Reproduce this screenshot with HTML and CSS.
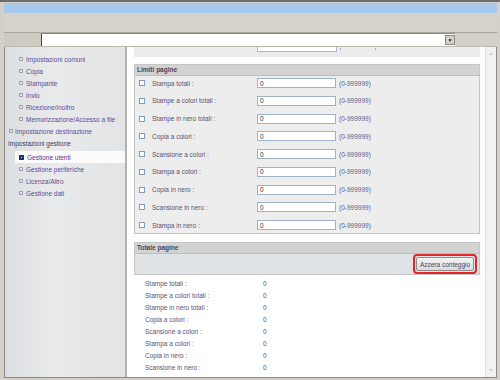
FILE: index.html
```html
<!DOCTYPE html>
<html lang="it">
<head>
    <meta charset="UTF-8">
    <title>Gestione utenti</title>
    <link rel="stylesheet" href="styles.css">
</head>
<body>
    <div class="window">
        <div class="titlebar"></div>
        <div class="toolbar"></div>
        <div class="addressbar">
            <div class="addr-side"></div>
            <div class="addr-field"><span class="addr-drop">&#9660;</span></div>
        </div>

        <div class="content">
            <nav class="sidebar">
                <a href="#" class="nav-item sub"><span class="bullet"></span>Impostazioni comuni</a>
                <a href="#" class="nav-item sub"><span class="bullet"></span>Copia</a>
                <a href="#" class="nav-item sub"><span class="bullet"></span>Stampante</a>
                <a href="#" class="nav-item sub"><span class="bullet"></span>Invio</a>
                <a href="#" class="nav-item sub"><span class="bullet"></span>Ricezione/Inoltro</a>
                <a href="#" class="nav-item sub"><span class="bullet"></span>Memorizzazione/Accesso a file</a>
                <a href="#" class="nav-item top"><span class="bullet"></span>Impostazione destinazione</a>
                <div class="nav-heading">Impostazioni gestione</div>
                <a href="#" class="nav-item sub selected"><span class="bullet"></span>Gestione utenti</a>
                <a href="#" class="nav-item sub"><span class="bullet"></span>Gestione periferiche</a>
                <a href="#" class="nav-item sub"><span class="bullet"></span>Licenza/Altro</a>
                <a href="#" class="nav-item sub"><span class="bullet"></span>Gestione dati</a>
            </nav>

            <main class="pane">
                <div class="prev-band">
                    <span class="prev-input"></span>
                    <span class="tick"></span>
                    <span class="tick far"></span>
                </div>

                <section class="group">
                    <div class="group-head">Limiti pagine</div>
                    <div class="group-body limits">
                        <div class="limit-row"><input type="checkbox" class="check"><label>Stampa totali :</label><input type="text" class="field" value="0"><span class="range">(0-999999)</span></div>
                        <div class="limit-row"><input type="checkbox" class="check"><label>Stampe a colori totali :</label><input type="text" class="field" value="0"><span class="range">(0-999999)</span></div>
                        <div class="limit-row"><input type="checkbox" class="check"><label>Stampe in nero totali :</label><input type="text" class="field" value="0"><span class="range">(0-999999)</span></div>
                        <div class="limit-row"><input type="checkbox" class="check"><label>Copia a colori :</label><input type="text" class="field" value="0"><span class="range">(0-999999)</span></div>
                        <div class="limit-row"><input type="checkbox" class="check"><label>Scansione a colori :</label><input type="text" class="field" value="0"><span class="range">(0-999999)</span></div>
                        <div class="limit-row"><input type="checkbox" class="check"><label>Stampa a colori :</label><input type="text" class="field" value="0"><span class="range">(0-999999)</span></div>
                        <div class="limit-row"><input type="checkbox" class="check"><label>Copia in nero :</label><input type="text" class="field" value="0"><span class="range">(0-999999)</span></div>
                        <div class="limit-row"><input type="checkbox" class="check"><label>Scansione in nero :</label><input type="text" class="field" value="0"><span class="range">(0-999999)</span></div>
                        <div class="limit-row"><input type="checkbox" class="check"><label>Stampa in nero :</label><input type="text" class="field" value="0"><span class="range">(0-999999)</span></div>
                    </div>
                </section>

                <section class="group totals">
                    <div class="group-head">Totale pagine</div>
                    <div class="group-body actions">
                        <span class="highlight"><button type="button">Azzera conteggio</button></span>
                    </div>
                </section>

                <div class="count-list">
                    <div class="count-row"><span class="count-label">Stampe totali :</span><span>0</span></div>
                    <div class="count-row"><span class="count-label">Stampe a colori totali :</span><span>0</span></div>
                    <div class="count-row"><span class="count-label">Stampe in nero totali :</span><span>0</span></div>
                    <div class="count-row"><span class="count-label">Copia a colori :</span><span>0</span></div>
                    <div class="count-row"><span class="count-label">Scansione a colori :</span><span>0</span></div>
                    <div class="count-row"><span class="count-label">Stampa a colori :</span><span>0</span></div>
                    <div class="count-row"><span class="count-label">Copia in nero :</span><span>0</span></div>
                    <div class="count-row"><span class="count-label">Scansione in nero :</span><span>0</span></div>
                </div>
            </main>

            <div class="scrollbar">
                <span class="arrow up"></span>
                <span class="arrow down"></span>
            </div>
        </div>
    </div>
</body>
</html>
```

FILE: styles.css
```css
html, body {
    margin: 0;
    background: #d4d0c8;
}
body {
    font-family: "Liberation Sans", Arial, sans-serif;
    font-size: 6.5px;
}
.window {
    width: 500px;
    height: 380px;
    box-sizing: border-box;
    border-top: 2px solid #6e6e6e;
    padding: 1px 3px 2px 4px;
    display: flex;
    flex-direction: column;
    background: #d4d0c8;
}
.titlebar {
    height: 10px;
    background: #a8c9ee;
}
.toolbar {
    height: 19px;
    background: #d6d3cd;
    border-bottom: 1px solid #aaa69e;
}
.addressbar {
    height: 13px;
    display: flex;
    border-bottom: 1px solid #bcb8b0;
}
.addr-side {
    width: 37px;
    background: #cfcbc3;
}
.addr-field {
    width: 414px;
    box-sizing: border-box;
    background: white;
    border-left: 1px solid #4a4a4a;
    border-top: 1px solid #8a8a8a;
    display: flex;
    justify-content: flex-end;
    align-items: center;
}
.addr-drop {
    width: 10px;
    height: 10px;
    box-sizing: border-box;
    background: #d4d0c8;
    border: 1px solid #8a8a8a;
    font-size: 5px;
    line-height: 8px;
    text-align: center;
    color: #222;
}

.content {
    flex-grow: 1;
    display: flex;
    border-bottom: 1px solid #8a8a8a;
    overflow: hidden;
}
.sidebar {
    width: 123px;
    box-sizing: border-box;
    border-left: 1px solid #8a8a8a;
    border-right: 2px solid #b2b2b2;
    background: linear-gradient(to right, #dcdfe1, #e8eaeb 40%, #e2e4e6);
    padding-top: 6px;
    display: flex;
    flex-direction: column;
}
.nav-item {
    height: 12px;
    display: flex;
    align-items: center;
    gap: 2px;
    color: #5f4b9a;
    text-decoration: none;
    white-space: nowrap;
}
.nav-item.sub {
    padding-left: 14px;
    gap: 3px;
}
.nav-item.top {
    padding-left: 4px;
}
.bullet {
    width: 4px;
    height: 4px;
    box-sizing: border-box;
    border: 1px solid #a2a4b8;
}
.nav-heading {
    height: 14px;
    line-height: 14px;
    padding-left: 3px;
    color: #3f3a60;
}
.nav-item.selected {
    margin-left: 10px;
    padding-left: 4px;
    background: #fbfbfb;
    color: #5a2d8e;
}
.nav-item.selected .bullet {
    width: 5px;
    height: 5px;
    border: 2px solid #25306c;
    background: #c9cfe6;
}

.pane {
    flex-grow: 1;
    background: white;
    padding: 0 5px 0 7px;
    overflow: hidden;
}
.prev-band {
    height: 10px;
    background: #ececec;
    display: flex;
    align-items: flex-start;
    margin-bottom: 7px;
}
.prev-input {
    width: 80px;
    height: 5px;
    box-sizing: border-box;
    margin-left: 123px;
    border: 1px solid #a9b8c8;
    border-top: none;
    background: white;
}
.tick {
    width: 1px;
    height: 2px;
    margin: 1px 0 0 3px;
    background: #b0a8bc;
}
.tick.far {
    margin-left: 34px;
}

.group {
    border: 1px solid #c6c6c6;
}
.group-head {
    height: 10px;
    line-height: 10px;
    padding-left: 2px;
    background: #d3d3d3;
    border-bottom: 1px solid #bdbdbd;
    color: #4a4462;
    font-weight: bold;
}
.group-body {
    background: #ededed;
}
.limits {
    padding: 2px 0 3px;
    display: flex;
    flex-direction: column;
    gap: 7.75px;
}
.limit-row {
    height: 10px;
    display: flex;
    align-items: center;
    color: #5a5272;
}
.check {
    appearance: none;
    width: 6px;
    height: 6px;
    margin: 0 7px 0 4px;
    box-sizing: border-box;
    border: 1px solid #7f9db9;
    background: white;
}
.limit-row label {
    width: 105px;
}
.field {
    width: 79px;
    height: 10px;
    box-sizing: border-box;
    margin: 0;
    padding: 0 2px;
    border: 1px solid #9fb3c8;
    font-family: inherit;
    font-size: 6.5px;
    color: #333;
}
.range {
    margin-left: 3px;
    color: #6a5a84;
}

.totals {
    margin-top: 8px;
}
.actions {
    height: 20px;
    background: #dfe3e5;
    display: flex;
    justify-content: flex-end;
    padding-right: 2px;
}
.highlight {
    border: 2px solid #e3262a;
    border-radius: 4px;
    padding: 1px;
    display: flex;
}
.highlight button {
    width: 58px;
    height: 14px;
    padding: 0;
    border: 1px solid #8e8e8e;
    border-radius: 2px;
    background: linear-gradient(#f4f4f4, #dcdcdc);
    font-family: inherit;
    font-size: 6.5px;
    color: #4a3f66;
}

.count-list {
    margin-top: 3px;
    padding-left: 11px;
}
.count-row {
    height: 12px;
    line-height: 12px;
    display: flex;
    color: #5a5272;
}
.count-label {
    width: 118px;
}

.scrollbar {
    width: 12px;
    box-sizing: border-box;
    background: #f2f2f2;
    border-left: 1px solid #e2e2e2;
    border-right: 1px solid #8a8a8a;
    display: flex;
    flex-direction: column;
    justify-content: space-between;
    align-items: center;
    padding: 6px 0 6px;
}
.arrow {
    width: 0;
    height: 0;
    border-left: 1.5px solid transparent;
    border-right: 1.5px solid transparent;
}
.arrow.up {
    border-bottom: 2px solid #a0a0a0;
}
.arrow.down {
    border-top: 2px solid #a0a0a0;
}
```
